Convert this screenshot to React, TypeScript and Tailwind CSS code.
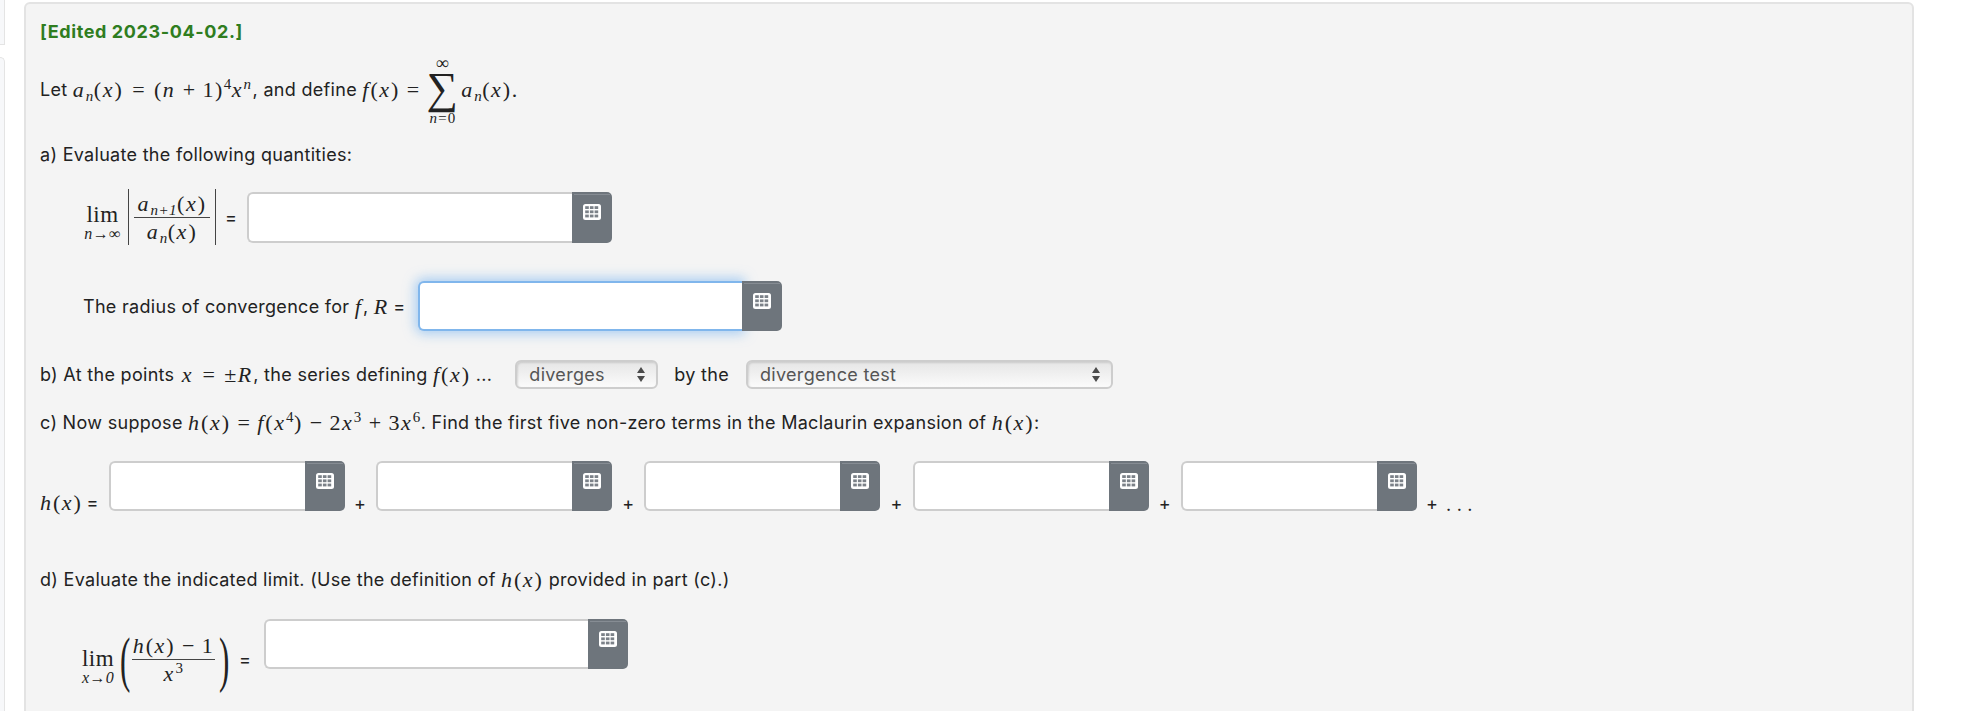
import React from 'react';

const mathFont = "font-['Liberation_Serif',serif]";

const M = ({ children }: { children: React.ReactNode }) => (
	<span className={`${mathFont} italic text-[22px] tracking-[2px] text-[#222]`}>{children}</span>
);

const R = ({ children }: { children: React.ReactNode }) => (
	<span className={`${mathFont} text-[22px] tracking-[1.5px] text-[#222]`}>{children}</span>
);

const Op = ({ children, wide }: { children: React.ReactNode; wide?: boolean }) => (
	<span className={`${mathFont} text-[22px] ${wide ? 'mx-[9px]' : 'mx-[7px]'} text-[#222]`}>{children}</span>
);

const Sub = ({ children }: { children: React.ReactNode }) => (
	<sub className={`${mathFont} italic text-[15px] tracking-[0.5px] leading-none relative top-[4px] bottom-auto`}>{children}</sub>
);

const Sup = ({ children, italic }: { children: React.ReactNode; italic?: boolean }) => (
	<sup className={`${mathFont} ${italic ? 'italic' : 'not-italic'} text-[15px] tracking-[0.5px] leading-none relative top-[-8px]`}>
		{children}
	</sup>
);

const GridIcon = () => (
	<svg width="18" height="16" viewBox="0 0 18 16" className="mt-[12px]">
		<rect width="18" height="16" rx="2.5" fill="#ffffff" />
		{[2.2, 6.4, 10.6].map((y) =>
			[2.2, 6.9, 11.6].map((x) => (
				<rect key={`${x}-${y}`} x={x} y={y} width="3.6" height="2.8" fill="#7b8188" />
			)),
		)}
	</svg>
);

const AnswerInput = ({
	width,
	height = 'h-[50px]',
	focused,
}: {
	width: string;
	height?: string;
	focused?: boolean;
}) => (
	<div className={`flex shrink-0 ${height}`}>
		<div
			className={`${width} bg-white rounded-l-[6px] border-2 border-r-0 ${
				focused ? 'border-[#80b6ec] shadow-[0_0_12px_3px_rgba(110,175,240,0.55)]' : 'border-[#cdcdcd]'
			}`}
		/>
		<div className="w-[40px] bg-[#6e757c] rounded-r-[5px] flex flex-col items-center">
			<div className="h-px w-[36px] mt-[2px] -mb-[3px] bg-[#868c93]" />
			<GridIcon />
		</div>
	</div>
);

const Arrows = () => (
	<svg width="10" height="17" viewBox="0 0 10 17" className="shrink-0">
		<path d="M5 1 L9 7 H1 Z" fill="#4a4a4a" />
		<path d="M5 16 L9 10 H1 Z" fill="#4a4a4a" />
	</svg>
);

const Select = ({ label, width }: { label: string; width: string }) => (
	<div
		className={`${width} h-[29px] flex items-center justify-between pl-[12px] pr-[10px] rounded-[6px] border-2 border-[#cdcdcd] bg-gradient-to-b from-[#e6e6e6] to-[#fbfbfb] shadow-[inset_1px_1px_2px_rgba(0,0,0,0.12)] text-[#555]`}
	>
		<span>{label}</span>
		<Arrows />
	</div>
);

const Plus = ({ className = '' }: { className?: string }) => (
	<span className={`self-end leading-none -mb-[2px] text-[#222] ${className}`}>+</span>
);

const Fraction = ({ top, bottom, width }: { top: React.ReactNode; bottom: React.ReactNode; width: string }) => (
	<div className={`${width} flex flex-col items-center leading-none`}>
		<div className="h-[29px] flex items-end pb-[2px] whitespace-nowrap">{top}</div>
		<div className="h-px w-full bg-[#444]" />
		<div className="h-[29px] flex items-start pt-[3px] whitespace-nowrap">{bottom}</div>
	</div>
);

const Lim = ({ under, width, offset }: { under: React.ReactNode; width: string; offset: string }) => (
	<div className={`${width} ${offset} flex flex-col items-center leading-none`}>
		<span className={`${mathFont} text-[23px] tracking-[0.5px] text-[#222]`}>lim</span>
		<span className={`${mathFont} italic text-[16px] whitespace-nowrap`}>{under}</span>
	</div>
);

const App = () => {
	return (
		<div className="h-[711px] w-[1968px] overflow-hidden bg-white flex font-['Inter',sans-serif] text-[18px] tracking-[0.3px] text-[#222]">
			<div className="w-[5px] flex flex-col shrink-0">
				<div className="h-[45px] bg-[#f7f8fa] border-r border-b border-[#e4e4e4]" />
				<div className="flex-1 mt-[12px] bg-[#f7f8fa] border-r border-t border-[#e4e4e4] rounded-tr-[6px]" />
			</div>

			<div className="ml-[19px] mt-[2px] w-[1890px] h-[800px] shrink-0 bg-[#f4f4f4] border-2 border-[#e3e3e3] rounded-[6px] pl-[14px] flex flex-col">
				<div className="mt-[15px] h-[24px] flex items-center font-bold tracking-[0.6px] text-[#2f7d1f]">
					[Edited 2023-04-02.]
				</div>

				<div className="mt-[8px] flex items-center h-[76px]">
					<span>Let&nbsp;</span>
					<M>
						a<Sub>n</Sub>
					</M>
					<R>(</R>
					<M>x</M>
					<R>)</R>
					<Op wide>=</Op>
					<R>(</R>
					<M>n</M>
					<Op>+</Op>
					<R>1)</R>
					<R>
						<Sup>4</Sup>
					</R>
					<M>
						x<Sup italic>n</Sup>
					</M>
					<span className="ml-[1px]">, and define&nbsp;</span>
					<M>f</M>
					<R>(</R>
					<M>x</M>
					<R>)</R>
					<Op>=</Op>
					<div className="flex flex-col items-center leading-none pt-[6px]">
						<span className={`${mathFont} text-[18px] h-[11px] leading-[11px]`}>∞</span>
						<span className={`${mathFont} text-[44px] h-[40px] leading-[40px]`}>∑</span>
						<span className={`${mathFont} italic text-[15px] mt-[2px]`}>
							n=<span className="not-italic">0</span>
						</span>
					</div>
					<span className="w-[3px]" />
					<M>
						a<Sub>n</Sub>
					</M>
					<R>(</R>
					<M>x</M>
					<R>).</R>
				</div>

				<div className="mt-[15px] h-[24px] flex items-center">a) Evaluate the following quantities:</div>

				<div className="mt-[25px] ml-[43px] flex items-center h-[52px]">
					<Lim under="n→∞" width="w-[39px]" offset="pt-[10px]" />
					<div className="ml-[6px] h-[56px] w-px bg-[#444]" />
					<div className="mx-[5px]">
						<Fraction
							width="w-[76px]"
							top={
								<>
									<M>
										a<Sub>n+1</Sub>
									</M>
									<R>(</R>
									<M>x</M>
									<R>)</R>
								</>
							}
							bottom={
								<>
									<M>
										a<Sub>n</Sub>
									</M>
									<R>(</R>
									<M>x</M>
									<R>)</R>
								</>
							}
						/>
					</div>
					<div className="h-[56px] w-px bg-[#444]" />
					<span className="ml-[9px] mr-[10px]">=</span>
					<AnswerInput width="w-[325px]" height="h-[51px]" />
				</div>

				<div className="mt-[38px] ml-[43px] flex items-center h-[50px]">
					<span>The radius of convergence for&nbsp;</span>
					<M>f</M>
					<span>,&nbsp;</span>
					<M>R</M>
					<span className="ml-[4px] mr-[13px]">=</span>
					<AnswerInput width="w-[324px]" focused />
				</div>

				<div className="mt-[29px] flex items-center h-[29px]">
					<span className="mr-[2px]">b) At the points&nbsp;</span>
					<M>x</M>
					<Op wide>=</Op>
					<R>±</R>
					<M>R</M>
					<span>, the series defining&nbsp;</span>
					<M>f</M>
					<R>(</R>
					<M>x</M>
					<R>)</R>
					<span>&nbsp;...</span>
					<span className="w-[23px]" />
					<Select label="diverges" width="w-[143px]" />
					<span className="ml-[16px] mr-[17px]">by the</span>
					<Select label="divergence test" width="w-[367px]" />
				</div>

				<div className="mt-[19px] flex items-center h-[28px]">
					<span>c) Now suppose&nbsp;</span>
					<M>h</M>
					<R>(</R>
					<M>x</M>
					<R>)</R>
					<Op>=</Op>
					<M>f</M>
					<R>(</R>
					<M>
						x<Sup>4</Sup>
					</M>
					<R>)</R>
					<Op>−</Op>
					<R>2</R>
					<M>
						x<Sup>3</Sup>
					</M>
					<Op>+</Op>
					<R>3</R>
					<M>
						x<Sup>6</Sup>
					</M>
					<span>. Find the first five non-zero terms in the Maclaurin expansion of&nbsp;</span>
					<M>h</M>
					<R>(</R>
					<M>x</M>
					<R>)</R>
					<span>:</span>
				</div>

				<div className="mt-[25px] flex h-[50px]">
					<div className="w-[69px] self-end flex items-center h-[26px] -mb-[4px]">
						<M>h</M>
						<R>(</R>
						<M>x</M>
						<R>)</R>
						<span className="ml-[4px]">=</span>
					</div>
					<AnswerInput width="w-[196px]" />
					<Plus className="ml-[9px] mr-[10px]" />
					<AnswerInput width="w-[196px]" />
					<Plus className="ml-[10px] mr-[10px]" />
					<AnswerInput width="w-[196px]" />
					<Plus className="ml-[10px] mr-[10px]" />
					<AnswerInput width="w-[196px]" />
					<Plus className="ml-[10px] mr-[10px]" />
					<AnswerInput width="w-[196px]" />
					<Plus className="ml-[9px]" />
					<span className="self-end ml-[8px] -mb-[3px] leading-none tracking-[0.3em]">...</span>
				</div>

				<div className="mt-[54px] flex items-center h-[28px]">
					<span>d) Evaluate the indicated limit. (Use the definition of&nbsp;</span>
					<M>h</M>
					<R>(</R>
					<M>x</M>
					<R>)</R>
					<span>&nbsp;provided in part (c).)</span>
				</div>

				<div className="mt-[26px] ml-[43px] flex items-start">
					<div className="flex items-center h-[68px] mt-[6px]">
						<Lim under="x→0" width="w-[30px]" offset="pt-[14px]" />
						<span className={`${mathFont} text-[62px] font-thin leading-none ml-[3px] scale-x-50 w-[16px] text-center`}>(</span>
						<Fraction
							width="w-[83px]"
							top={
								<>
									<M>h</M>
									<R>(</R>
									<M>x</M>
									<R>)</R>
									<Op>−</Op>
									<R>1</R>
								</>
							}
							bottom={
								<M>
									x<Sup>3</Sup>
								</M>
							}
						/>
						<span className={`${mathFont} text-[62px] font-thin leading-none scale-x-50 w-[16px] text-center`}>)</span>
						<span className="ml-[8px] mr-[13px]">=</span>
					</div>
					<AnswerInput width="w-[324px]" />
				</div>
			</div>
		</div>
	);
};

export default App;
